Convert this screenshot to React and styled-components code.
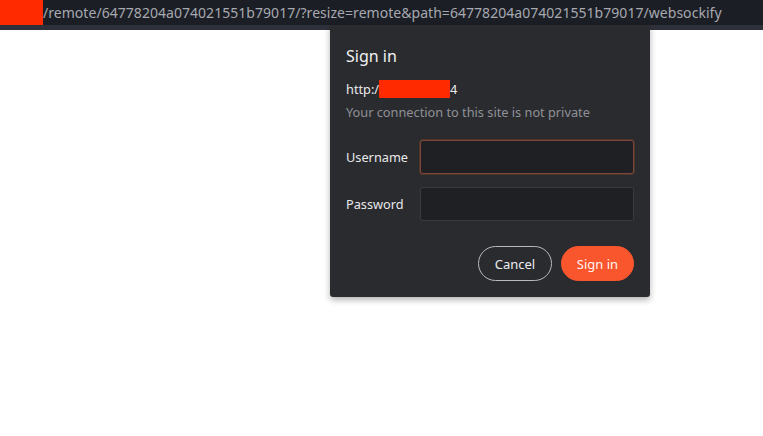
import React from 'react';
import styled, { createGlobalStyle } from 'styled-components';

const GlobalStyle = createGlobalStyle`
  html, body {
    margin: 0;
    padding: 0;
    background: #ffffff;
    font-family: 'Noto Sans', 'Open Sans', sans-serif;
  }
`;

const PageStyle = styled.div`
  position: relative;
  width: 763px;
  height: 436px;
  overflow: hidden;
  background: #ffffff;
`;

const UrlBarStyle = styled.div`
  display: flex;
  align-items: center;
  height: 25px;
  background: #1c1e25;
  overflow: hidden;
  white-space: nowrap;
`;

const RedactStyle = styled.div`
  flex: none;
  width: ${(props) => props.w}px;
  height: ${(props) => props.h}px;
  background: #ff2a00;
`;

const UrlTextStyle = styled.span`
  font-size: 14px;
  letter-spacing: 0.04px;
  color: #a6a9b0;
`;

const StripStyle = styled.div`
  height: 5px;
  background: #2e3139;
`;

const DialogStyle = styled.div`
  position: absolute;
  left: 330px;
  top: 25px;
  width: 320px;
  box-sizing: border-box;
  padding: 20px 16px 16px 16px;
  background: #2a2b2f;
  border-radius: 0 0 3px 3px;
  box-shadow: 0 3px 6px rgba(0, 0, 0, 0.3);
  color: #f0f0f2;
`;

const TitleStyle = styled.div`
  font-size: 16px;
  line-height: 22px;
  color: #f2f2f4;
`;

const HostStyle = styled.div`
  display: flex;
  align-items: center;
  margin-top: 13px;
  font-size: 12.75px;
  line-height: 18px;
  color: #ececee;
`;

const NoteStyle = styled.div`
  margin-top: 5px;
  font-size: 12.75px;
  line-height: 18px;
  color: #8f9197;
`;

const FormStyle = styled.div`
  display: grid;
  grid-template-columns: 74px 1fr;
  row-gap: 13px;
  align-items: center;
  margin-top: 19px;
`;

const LabelStyle = styled.label`
  font-size: 12.75px;
  color: #e8e8ea;
`;

const InputStyle = styled.input`
  box-sizing: border-box;
  height: 34px;
  width: 100%;
  margin: 0;
  padding: 0 8px;
  background: #1f2023;
  border: 1px solid ${(props) => (props.focused ? '#7d4536' : '#3a3b40')};
  box-shadow: ${(props) =>
    props.focused ? '0 0 0 1px rgba(125, 69, 54, 0.45)' : 'none'};
  border-radius: 3px;
  outline: none;
  color: #f0f0f2;
  font-family: inherit;
  font-size: 13px;
`;

const ActionsStyle = styled.div`
  display: flex;
  justify-content: flex-end;
  gap: 9px;
  margin-top: 25px;
`;

const ButtonStyle = styled.button`
  box-sizing: border-box;
  height: 35px;
  padding: 0 14px;
  min-width: ${(props) => (props.primary ? '73px' : '74px')};
  border-radius: 18px;
  border: 1px solid ${(props) => (props.primary ? '#f9562e' : '#b8b9bd')};
  background: ${(props) => (props.primary ? '#f9562e' : 'transparent')};
  color: ${(props) => (props.primary ? '#fff3ee' : '#ececee')};
  font-family: inherit;
  font-size: 13px;
  cursor: pointer;
`;

const App = () => {
  return (
    <PageStyle>
      <GlobalStyle />
      <UrlBarStyle>
        <RedactStyle w={43} h={25} />
        <UrlTextStyle>
          /remote/64778204a074021551b79017/?resize=remote&amp;path=64778204a074021551b79017/websockify
        </UrlTextStyle>
      </UrlBarStyle>
      <StripStyle />
      <DialogStyle>
        <TitleStyle>Sign in</TitleStyle>
        <HostStyle>
          http:/
          <RedactStyle w={71} h={18} />
          4
        </HostStyle>
        <NoteStyle>Your connection to this site is not private</NoteStyle>
        <FormStyle>
          <LabelStyle>Username</LabelStyle>
          <InputStyle type="text" focused />
          <LabelStyle>Password</LabelStyle>
          <InputStyle type="password" />
        </FormStyle>
        <ActionsStyle>
          <ButtonStyle type="button">Cancel</ButtonStyle>
          <ButtonStyle type="button" primary>
            Sign in
          </ButtonStyle>
        </ActionsStyle>
      </DialogStyle>
    </PageStyle>
  );
};

export default App;
